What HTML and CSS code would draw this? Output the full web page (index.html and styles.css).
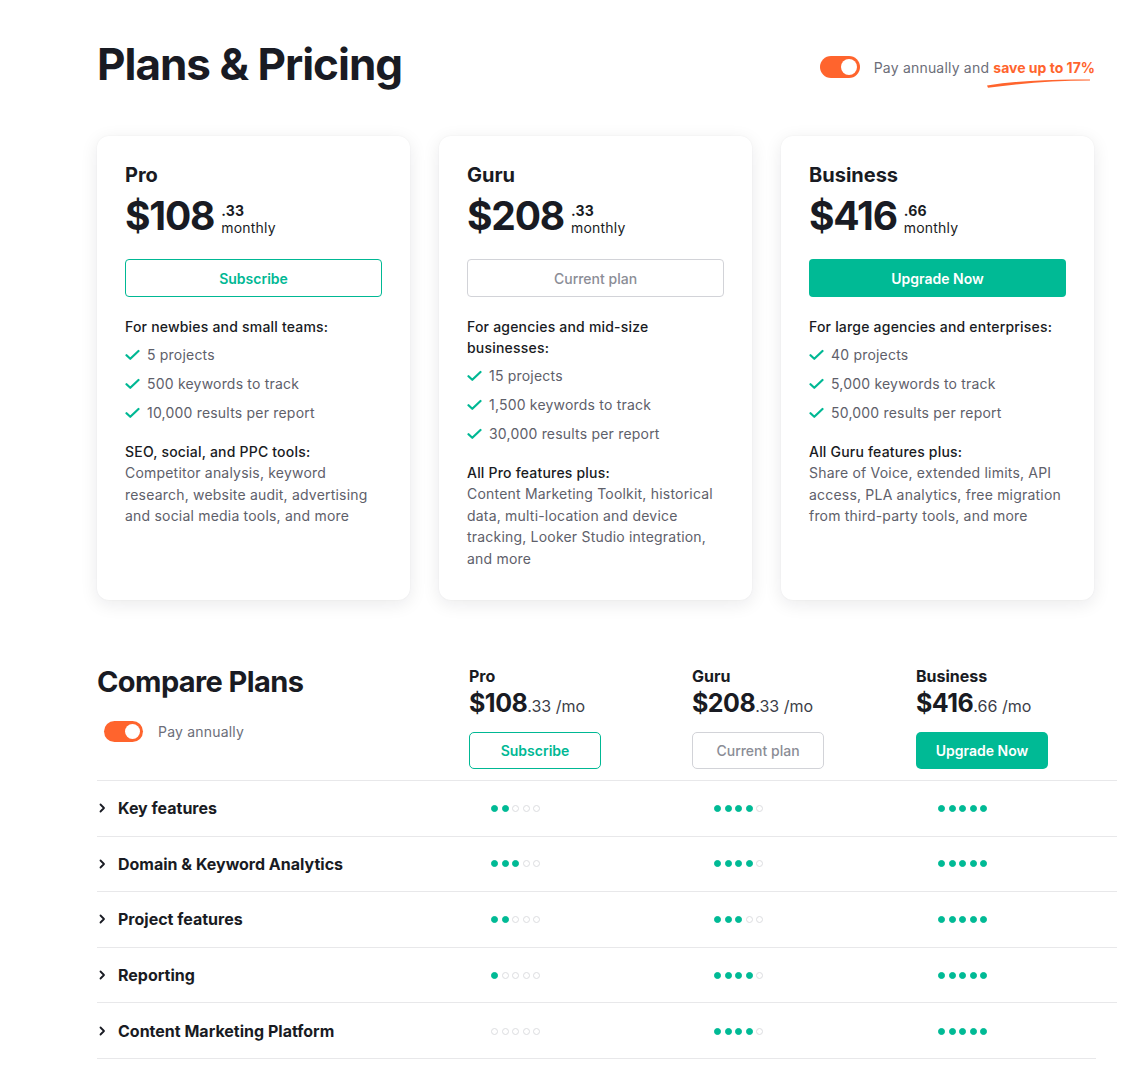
FILE: index.html
```html
<!doctype html>
<html lang="en">
<head>
 <meta charset="UTF-8">
 <title>Plans &amp; Pricing</title>
 <link rel="stylesheet" href="styles.css">
</head>
<body>
<div class="page">
 <div class="top">
  <h1>Plans &amp; Pricing</h1>
  <div class="billing">
   <span class="toggle"></span>
   <span class="billing-text">Pay annually and <b class="save">save up to 17%<svg class="swash" width="106" height="12" viewBox="0 0 106 12"><path d="M1 9.5 Q 48 2.5 104 3.6 L 104 4.6 Q 50 5 2 11.8 Z" fill="#ff642d"/></svg></b></span>
  </div>
 </div>

 <div class="cards">
  <div class="card">
   <div class="plan">Pro</div>
   <div class="price">
    <span class="big">$108</span>
    <span class="cents"><b>.33</b><span>monthly</span></span>
   </div>
   <a class="btn btn-line">Subscribe</a>
   <p class="lead">For newbies and small teams:</p>
   <ul class="checks">
    <li><svg width="15" height="12" viewBox="0 0 15 12"><path d="M1.5 6.2 L5.3 9.8 L13.5 2" fill="none" stroke="#00b894" stroke-width="2.2" stroke-linecap="round" stroke-linejoin="round"/></svg>5 projects</li>
    <li><svg width="15" height="12" viewBox="0 0 15 12"><path d="M1.5 6.2 L5.3 9.8 L13.5 2" fill="none" stroke="#00b894" stroke-width="2.2" stroke-linecap="round" stroke-linejoin="round"/></svg>500 keywords to track</li>
    <li><svg width="15" height="12" viewBox="0 0 15 12"><path d="M1.5 6.2 L5.3 9.8 L13.5 2" fill="none" stroke="#00b894" stroke-width="2.2" stroke-linecap="round" stroke-linejoin="round"/></svg>10,000 results per report</li>
   </ul>
   <p class="lead lead-gap">SEO, social, and PPC tools:</p>
   <p class="desc">Competitor analysis, keyword research, website audit, advertising and social media tools, and more</p>
  </div>

  <div class="card">
   <div class="plan">Guru</div>
   <div class="price">
    <span class="big">$208</span>
    <span class="cents"><b>.33</b><span>monthly</span></span>
   </div>
   <a class="btn btn-current">Current plan</a>
   <p class="lead">For agencies and mid-size businesses:</p>
   <ul class="checks">
    <li><svg width="15" height="12" viewBox="0 0 15 12"><path d="M1.5 6.2 L5.3 9.8 L13.5 2" fill="none" stroke="#00b894" stroke-width="2.2" stroke-linecap="round" stroke-linejoin="round"/></svg>15 projects</li>
    <li><svg width="15" height="12" viewBox="0 0 15 12"><path d="M1.5 6.2 L5.3 9.8 L13.5 2" fill="none" stroke="#00b894" stroke-width="2.2" stroke-linecap="round" stroke-linejoin="round"/></svg>1,500 keywords to track</li>
    <li><svg width="15" height="12" viewBox="0 0 15 12"><path d="M1.5 6.2 L5.3 9.8 L13.5 2" fill="none" stroke="#00b894" stroke-width="2.2" stroke-linecap="round" stroke-linejoin="round"/></svg>30,000 results per report</li>
   </ul>
   <p class="lead lead-gap">All Pro features plus:</p>
   <p class="desc">Content Marketing Toolkit, historical data, multi-location and device tracking, Looker Studio integration, and more</p>
  </div>

  <div class="card">
   <div class="plan">Business</div>
   <div class="price">
    <span class="big">$416</span>
    <span class="cents"><b>.66</b><span>monthly</span></span>
   </div>
   <a class="btn btn-fill">Upgrade Now</a>
   <p class="lead">For large agencies and enterprises:</p>
   <ul class="checks">
    <li><svg width="15" height="12" viewBox="0 0 15 12"><path d="M1.5 6.2 L5.3 9.8 L13.5 2" fill="none" stroke="#00b894" stroke-width="2.2" stroke-linecap="round" stroke-linejoin="round"/></svg>40 projects</li>
    <li><svg width="15" height="12" viewBox="0 0 15 12"><path d="M1.5 6.2 L5.3 9.8 L13.5 2" fill="none" stroke="#00b894" stroke-width="2.2" stroke-linecap="round" stroke-linejoin="round"/></svg>5,000 keywords to track</li>
    <li><svg width="15" height="12" viewBox="0 0 15 12"><path d="M1.5 6.2 L5.3 9.8 L13.5 2" fill="none" stroke="#00b894" stroke-width="2.2" stroke-linecap="round" stroke-linejoin="round"/></svg>50,000 results per report</li>
   </ul>
   <p class="lead lead-gap">All Guru features plus:</p>
   <p class="desc">Share of Voice, extended limits, API access, PLA analytics, free migration from third-party tools, and more</p>
  </div>
 </div>

 <div class="compare">
  <div class="compare-head">
   <div class="compare-title">
    <h2>Compare Plans</h2>
    <div class="pay"><span class="toggle"></span><span>Pay annually</span></div>
   </div>
   <div class="col">
    <div class="col-name">Pro</div>
    <div class="col-price"><b>$108</b>.33 /mo</div>
    <a class="btn btn-line btn-small">Subscribe</a>
   </div>
   <div class="col">
    <div class="col-name">Guru</div>
    <div class="col-price"><b>$208</b>.33 /mo</div>
    <a class="btn btn-current btn-small">Current plan</a>
   </div>
   <div class="col">
    <div class="col-name">Business</div>
    <div class="col-price"><b>$416</b>.66 /mo</div>
    <a class="btn btn-fill btn-small">Upgrade Now</a>
   </div>
  </div>

  <div class="row">
   <div class="label"><svg width="8" height="10" viewBox="0 0 8 10"><path d="M2.5 1.5 L6 5 L2.5 8.5" fill="none" stroke="#191b23" stroke-width="1.8" stroke-linecap="round" stroke-linejoin="round"/></svg>Key features</div>
   <div class="dots"><i class="on"></i><i class="on"></i><i></i><i></i><i></i></div>
   <div class="dots"><i class="on"></i><i class="on"></i><i class="on"></i><i class="on"></i><i></i></div>
   <div class="dots"><i class="on"></i><i class="on"></i><i class="on"></i><i class="on"></i><i class="on"></i></div>
  </div>
  <div class="row">
   <div class="label"><svg width="8" height="10" viewBox="0 0 8 10"><path d="M2.5 1.5 L6 5 L2.5 8.5" fill="none" stroke="#191b23" stroke-width="1.8" stroke-linecap="round" stroke-linejoin="round"/></svg>Domain &amp; Keyword Analytics</div>
   <div class="dots"><i class="on"></i><i class="on"></i><i class="on"></i><i></i><i></i></div>
   <div class="dots"><i class="on"></i><i class="on"></i><i class="on"></i><i class="on"></i><i></i></div>
   <div class="dots"><i class="on"></i><i class="on"></i><i class="on"></i><i class="on"></i><i class="on"></i></div>
  </div>
  <div class="row">
   <div class="label"><svg width="8" height="10" viewBox="0 0 8 10"><path d="M2.5 1.5 L6 5 L2.5 8.5" fill="none" stroke="#191b23" stroke-width="1.8" stroke-linecap="round" stroke-linejoin="round"/></svg>Project features</div>
   <div class="dots"><i class="on"></i><i class="on"></i><i></i><i></i><i></i></div>
   <div class="dots"><i class="on"></i><i class="on"></i><i class="on"></i><i></i><i></i></div>
   <div class="dots"><i class="on"></i><i class="on"></i><i class="on"></i><i class="on"></i><i class="on"></i></div>
  </div>
  <div class="row">
   <div class="label"><svg width="8" height="10" viewBox="0 0 8 10"><path d="M2.5 1.5 L6 5 L2.5 8.5" fill="none" stroke="#191b23" stroke-width="1.8" stroke-linecap="round" stroke-linejoin="round"/></svg>Reporting</div>
   <div class="dots"><i class="on"></i><i></i><i></i><i></i><i></i></div>
   <div class="dots"><i class="on"></i><i class="on"></i><i class="on"></i><i class="on"></i><i></i></div>
   <div class="dots"><i class="on"></i><i class="on"></i><i class="on"></i><i class="on"></i><i class="on"></i></div>
  </div>
  <div class="row row-last">
   <div class="label"><svg width="8" height="10" viewBox="0 0 8 10"><path d="M2.5 1.5 L6 5 L2.5 8.5" fill="none" stroke="#191b23" stroke-width="1.8" stroke-linecap="round" stroke-linejoin="round"/></svg>Content Marketing Platform</div>
   <div class="dots"><i></i><i></i><i></i><i></i><i></i></div>
   <div class="dots"><i class="on"></i><i class="on"></i><i class="on"></i><i class="on"></i><i></i></div>
   <div class="dots"><i class="on"></i><i class="on"></i><i class="on"></i><i class="on"></i><i class="on"></i></div>
  </div>
 </div>
</div>
</body>
</html>
```

FILE: styles.css
```css
*{
 margin:0;
 padding:0;
 box-sizing:border-box;
}
body{
 background:#fff;
 color:#191b23;
 font-family:Inter,"Noto Sans",Arial,sans-serif;
 font-size:14px;
 overflow:hidden;
}
.page{
 width:1146px;
 padding:37px 0 0 97px;
}

/* header */
.top{
 display:flex;
 justify-content:space-between;
 align-items:center;
 width:998px;
}
h1{
 font-size:44px;
 line-height:54px;
 font-weight:700;
 letter-spacing:-1px;
}
.billing{
 display:flex;
 align-items:center;
 gap:14px;
 margin-top:6px;
}
.toggle{
 position:relative;
 display:inline-block;
 width:40px;
 height:22px;
 border-radius:11px;
 background:#ff642d;
}
.toggle:after{
 content:'';
 position:absolute;
 right:3px;
 top:3px;
 width:16px;
 height:16px;
 border-radius:50%;
 background:#fff;
}
.billing-text{
 color:#6c6e79;
 font-size:14px;
 letter-spacing:0.2px;
}
.save{
 position:relative;
 color:#ff642d;
 font-weight:700;
 letter-spacing:0;
}
.swash{
 position:absolute;
 left:-7px;
 top:17px;
}

/* cards */
.cards{
 display:flex;
 gap:29px;
 margin-top:45px;
}
.card{
 width:313px;
 height:464px;
 padding:25px 28px 0;
 border-radius:12px;
 background:#fff;
 box-shadow:0 4px 18px rgba(25,27,35,.09),0 0 2px rgba(25,27,35,.05);
 letter-spacing:0.2px;
}
.plan{
 font-size:20px;
 line-height:28px;
 font-weight:700;
 letter-spacing:0;
}
.price{
 display:flex;
 align-items:flex-end;
 gap:7px;
 margin-top:5px;
}
.big{
 font-size:39px;
 line-height:44px;
 font-weight:700;
 letter-spacing:-1.2px;
}
.cents{
 display:flex;
 flex-direction:column;
 padding-bottom:1px;
 font-size:14px;
}
.cents b{
 line-height:16px;
}
.cents span{
 line-height:18px;
}
.btn{
 display:flex;
 align-items:center;
 justify-content:center;
 height:38px;
 margin-top:21px;
 border-radius:4px;
 font-size:14px;
 font-weight:600;
 letter-spacing:0;
}
.btn-line{
 border:1px solid #00b894;
 color:#00b894;
}
.btn-current{
 border:1px solid #d2d3d8;
 color:#8b8d96;
 font-weight:500;
}
.btn-fill{
 background:#00ba95;
 color:#fff;
}
.lead{
 margin-top:19px;
 font-weight:500;
 line-height:21px;
}
.lead-gap{
 margin-top:18px;
}
.checks{
 list-style:none;
 margin-top:7px;
}
.checks li{
 display:flex;
 align-items:center;
 gap:7px;
 line-height:21px;
 color:#5e606a;
}
.checks li + li{
 margin-top:8px;
}
.desc{
 color:#5e606a;
 line-height:21.5px;
}

/* compare */
.compare{
 width:1020px;
 margin-top:64px;
}
.compare-head,
.row{
 display:grid;
 grid-template-columns:372px 223px 224px 1fr;
}
.compare-head{
 padding-bottom:11px;
 border-bottom:1px solid #e8e8ea;
}
h2{
 font-size:29px;
 line-height:36px;
 font-weight:700;
 letter-spacing:-0.6px;
}
.pay{
 display:flex;
 align-items:center;
 gap:15px;
 margin:21px 0 0 7px;
 color:#6c6e79;
 letter-spacing:0.2px;
}
.pay .toggle{
 width:39px;
 height:21px;
}
.pay .toggle:after{
 width:15px;
 height:15px;
}
.col{
 padding-top:1px;
}
.col-name{
 font-size:16px;
 line-height:22px;
 font-weight:700;
}
.col-price{
 font-size:16px;
 line-height:32px;
 color:#3c3e48;
}
.col-price b{
 font-size:25px;
 color:#191b23;
 letter-spacing:-0.5px;
}
.btn-small{
 width:132px;
 height:37px;
 margin-top:10px;
 border-radius:5px;
}
.row{
 align-items:center;
 height:55.6px;
 border-bottom:1px solid #e8e8ea;
}
.label{
 display:flex;
 align-items:center;
 gap:12px;
 padding-left:1px;
 font-size:16px;
 font-weight:700;
}
.dots{
 display:flex;
 gap:3.5px;
 padding-left:22px;
}
.dots i{
 display:block;
 width:7px;
 height:7px;
 border-radius:50%;
 border:1px solid #dcdde0;
}
.dots i.on{
 background:#00ba95;
 border-color:#00ba95;
}
.row-last{
 border-bottom:0;
 background:linear-gradient(#e8e8ea,#e8e8ea) left bottom/999px 1px no-repeat;
}
```
